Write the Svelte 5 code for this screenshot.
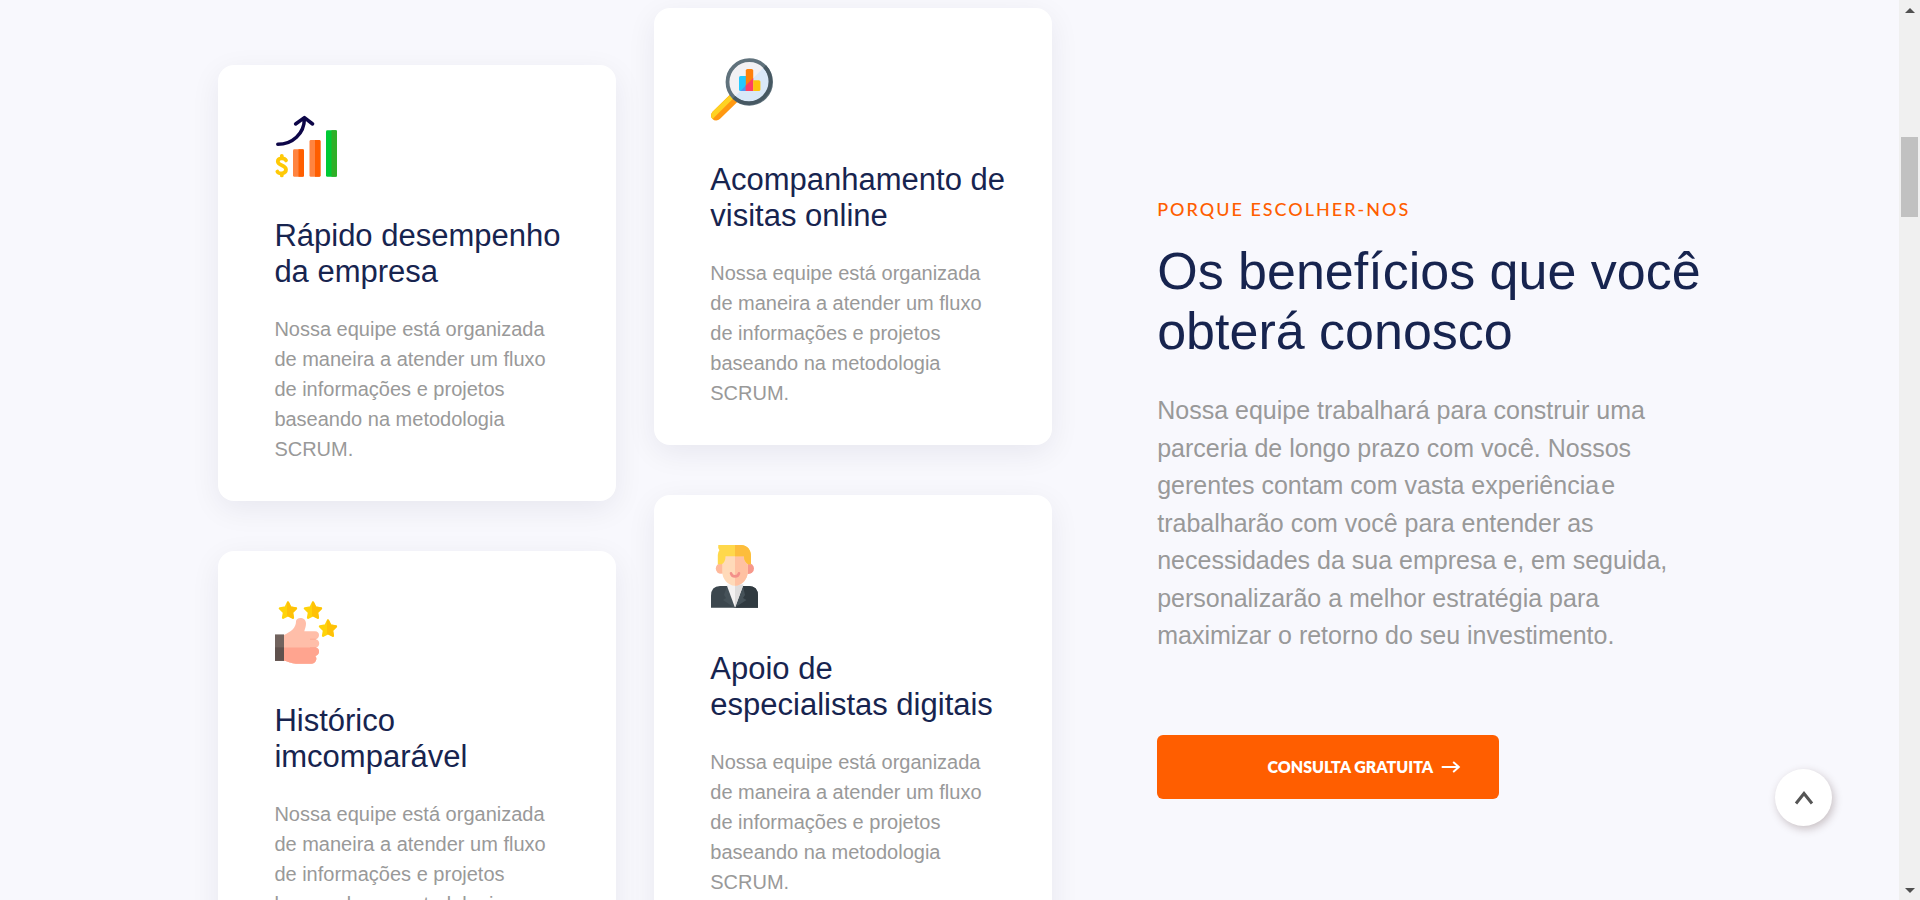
<script lang="ts">
  type Card = { icon: string; iconHeight: number; title: string };

  const text =
    'Nossa equipe está organizada de maneira a atender um fluxo de informações e projetos baseando na metodologia SCRUM.';

  const columns: Card[][] = [
    [
      { icon: 'growth', iconHeight: 64, title: 'Rápido desempenho da empresa' },
      { icon: 'thumb', iconHeight: 63, title: 'Histórico imcomparável' },
    ],
    [
      { icon: 'search', iconHeight: 65, title: 'Acompanhamento de visitas online' },
      { icon: 'person', iconHeight: 67, title: 'Apoio de especialistas digitais' },
    ],
  ];

  const stars = [
    [14, 9],
    [39, 9],
    [54, 27],
  ];
</script>

{#snippet icon(name: string, height: number)}
  <svg class="icon" width="64" {height} viewBox="0 0 64 {height}" aria-hidden="true">
    {#if name === 'growth'}
      <path d="M3.8 29.3C18 29.3 30.4 19 30.4 3.4M21.6 9 30.4 2.6 38.6 9" fill="none" stroke="#0d0648" stroke-width="3.5" stroke-linecap="round" stroke-linejoin="round" />
      <path d="M12 45.4C10.6 42.6 3.8 42.4 3.8 46.5C3.8 50.8 12 49.6 12 54.6C12 59 5 59.4 3.4 56.6M7.8 40.8V43M7.8 58.5V60.4" fill="none" stroke="#ffc906" stroke-width="3.8" stroke-linecap="round" stroke-linejoin="round" />
      <rect x="19" y="34.3" width="11" height="27.5" rx="1.4" fill="#ff8440" />
      <path d="M24.5 34.3h4.1q1.4 0 1.4 1.4v24.7q0 1.4-1.4 1.4h-4.1z" fill="#ff5e00" />
      <rect x="35.5" y="25" width="11" height="36.8" rx="1.4" fill="#ff8440" />
      <path d="M41 25h4.1q1.4 0 1.4 1.4v34q0 1.4-1.4 1.4H41z" fill="#ff5e00" />
      <rect x="52" y="15.3" width="11" height="46.5" rx="1.4" fill="#00ca35" />
      <path d="M57.5 15.3h4.1q1.4 0 1.4 1.4v43.7q0 1.4-1.4 1.4h-4.1z" fill="#2faf27" />
    {:else if name === 'search'}
      <path d="m6.2 57.4 17-16.6" stroke="#ff9811" stroke-width="10.4" stroke-linecap="round" />
      <path d="M2.6 61 25 38.8 19.4 37.4 2.6 53.8A5.2 5.2 0 0 0 2.6 61z" fill="#fed223" />
      <circle cx="39.3" cy="24" r="21.8" fill="#f2f1f4" />
      <path d="M54.7 8.6A21.8 21.8 0 0 1 23.9 39.4z" fill="#d9e8f8" />
      <path d="M30.6 18H36v15h-5.4q-1.6 0-1.6-1.6V19.6q0-1.6 1.6-1.6z" fill="#23c9ff" />
      <path d="M36 27.3V33h-5.5z" fill="#4e91f5" />
      <path d="M35.8 33V12.6q0-1.6 1.6-1.6h4.2q1.6 0 1.6 1.6V33z" fill="#ff810b" />
      <path d="M43.2 20.1V33h-7.4v-5.5z" fill="#ff3f62" />
      <path d="M43.2 22.2h5.6q1.6 0 1.6 1.6v7.6q0 1.6-1.6 1.6h-5.6z" fill="#ffc20b" />
      <circle cx="39.3" cy="24" r="21.8" fill="none" stroke="#60727c" stroke-width="3.8" />
      <path d="M54.7 8.6A21.8 21.8 0 0 1 23.9 39.4" fill="none" stroke="#465862" stroke-width="3.8" />
    {:else if name === 'thumb'}
      {#each stars as [x, y]}
        <g transform="translate({x} {y})">
          <path d="m0-7.4 2.4 4.9 5.6.9-4 4 .9 5.3L0 5.2-4.9 7.7l.9-5.3-4-4 5.6-.9z" fill="#ffd30a" stroke="#ffd30a" stroke-width="2.4" stroke-linejoin="round" />
          <path d="m0-7.4 2.4 4.9 5.6.9-4 4 .9 5.3L0 5.2z" fill="#ffc107" stroke="#ffc107" stroke-width="2" stroke-linejoin="round" />
        </g>
      {/each}
      <g transform="translate(0 -1)">
        <path d="M10 35C17 31.5 22 28 22 21.5C22 16.5 32 16.5 32 23.5C32 27 30.8 29 30.3 31.2H41C46.5 31.2 46 38.5 41.7 39.2C46.4 39.8 46.4 46.8 42 47.6C46.4 48.4 46 55.3 41.2 56C43.8 58 42 63.7 37.5 63.7H22C17 63.7 14.5 61.3 10 60.8z" fill="#ffbea9" />
        <path d="M10 47.4H42C46.4 48.4 46 55.3 41.2 56C43.8 58 42 63.7 37.5 63.7H22C17 63.7 14.5 61.3 10 60.8z" fill="#ffa48f" />
        <path d="M36 39.2h5.7M36 47.5h6M36 56h5.2" stroke="#fba791" stroke-width=".8" />
        <path d="M1 34.4h9v26.4H1z" fill="#71635e" />
        <path d="M1 47.4h9v13.4H1z" fill="#5f514d" />
      </g>
    {:else}
      <path d="M10 41h29q9 0 9 10v11.8H1V51q0-10 9-10z" fill="#3c474e" />
      <path d="M24.5 41H39q9 0 9 10v11.8H24.5z" fill="#303a40" />
      <path d="m17 41-3 9 2 3-3 2 11.5 7.8L36.5 55 33 53l2-3-2-9z" fill="#465259" />
      <path d="M16.5 39.5 25 62.8 33.5 39.5z" fill="#f4f2f2" />
      <path d="M25 39.5v23.3l8.5-23.3z" fill="#dedcdc" />
      <circle cx="11" cy="23.5" r="5.2" fill="#ffb99b" />
      <circle cx="38.6" cy="23.5" r="5.4" fill="#f7988b" />
      <path d="M12.2 10h25.6v16.5C37.8 34 32 40.8 25 40.8S12.2 34 12.2 26.5z" fill="#ffdab9" />
      <path d="M25 10h12.8v16.5C37.8 34 32 40.8 25 40.8z" fill="#ffc1a2" />
      <path d="M8.3 0H31C37.5 0 41 5 41 11v8.2h-2.8q-4.2-2.6-4.2-8H15.5q0 6-3.7 8H7.8V10Q7.8 7 9.4 5.2Q7.6 3 8.3 0z" fill="#ffd84b" />
      <path d="M25 0h6C37.5 0 41 5 41 11v8.2h-2.8q-4.2-2.6-4.2-8h-9z" fill="#fdbd3c" />
      <path d="M21 28.2q.6 3.2 4 3.2t4-3.2" fill="none" stroke="#f3908a" stroke-width="2.6" stroke-linecap="round" />
    {/if}
  </svg>
{/snippet}

<div class="page">
  <main>
    <section class="benefits">
      <div class="cards">
        {#each columns as column, i}
          <div class="column" class:lowered={i === 0}>
            {#each column as card}
              <article class="card">
                {@render icon(card.icon, card.iconHeight)}
                <h3>{card.title}</h3>
                <p>{text}</p>
              </article>
            {/each}
          </div>
        {/each}
      </div>
      <div class="intro">
        <span class="eyebrow">Porque escolher-nos</span>
        <h2>Os benefícios que você obterá conosco</h2>
        <p>
          Nossa equipe trabalhará para construir uma parceria de longo prazo com você. Nossos
          gerentes contam com vasta experiência&#8202;e trabalharão com você para entender as
          necessidades da sua empresa e, em seguida, personalizarão a melhor estratégia para
          maximizar o retorno do seu investimento.
        </p>
        <a class="cta" href="#consulta">
          Consulta gratuita
          <svg viewBox="0 0 20 12" aria-hidden="true"><path d="M1.5 6h16M12.8 1.5 17.8 6l-5 4.5" /></svg>
        </a>
      </div>
    </section>
    <button class="to-top" type="button" aria-label="Voltar ao topo">
      <svg viewBox="0 0 20 14" aria-hidden="true"><path d="M2 12.5 10 2.5l8 10" /></svg>
    </button>
  </main>
  <div class="scrollbar" aria-hidden="true">
    <i class="up"></i>
    <div class="thumb"></div>
    <i class="down"></i>
  </div>
</div>

<style>
  :global(body) {
    background: #f8f8fd;
    font-family: "Liberation Sans", Arial, sans-serif;
  }

  .page {
    display: flex;
    height: 100vh;
    overflow: hidden;
  }

  main {
    position: relative;
    flex: 1;
    min-width: 0;
    overflow: hidden;
  }

  h2,
  h3,
  p {
    margin: 0;
  }

  h2,
  h3 {
    color: #17244f;
    font-weight: 400;
  }

  .benefits {
    display: grid;
    grid-template-columns: minmax(0, 834fr) minmax(0, 590fr);
    gap: 105px;
    padding: 8px 8% 0 11.5%;
  }

  .cards {
    display: grid;
    grid-template-columns: repeat(2, minmax(0, 1fr));
    gap: 38px;
    align-items: start;
  }

  .column {
    display: flex;
    flex-direction: column;
    gap: 50px;
  }

  .lowered {
    padding-top: 57px;
  }

  .card {
    padding: 50px 40px 37px 56px;
    border-radius: 16px;
    background: #fff;
    box-shadow: 0 8px 30px rgba(20, 20, 50, 0.07);
  }

  .icon {
    display: block;
    margin-bottom: 39px;
  }

  .card h3 {
    font-size: 31px;
    line-height: 36px;
    margin-bottom: 24px;
  }

  .card p {
    max-width: 288px;
    color: #999;
    font-size: 20px;
    line-height: 30px;
  }

  .intro {
    padding-top: 189px;
  }

  .eyebrow {
    display: block;
    color: #ff5e00;
    font-family: "Lato Medium", Lato, sans-serif;
    font-size: 18px;
    font-weight: 500;
    line-height: 24px;
    letter-spacing: 2px;
    text-transform: uppercase;
  }

  .intro h2 {
    margin-top: 20px;
    font-size: 52px;
    line-height: 60px;
  }

  .intro p {
    max-width: 526px;
    margin-top: 31px;
    color: #999;
    font-size: 25px;
    line-height: 1.5;
  }

  .cta {
    display: flex;
    align-items: center;
    justify-content: flex-end;
    gap: 8px;
    box-sizing: border-box;
    width: 342px;
    max-width: 100%;
    height: 64px;
    margin-top: 80px;
    padding: 0 38px;
    border-radius: 6px;
    background: #ff5e00;
    color: #fff;
    font: 800 16px/24px Lato, sans-serif;
    text-decoration: none;
    text-transform: uppercase;
  }

  .cta svg {
    width: 20px;
    height: 12px;
  }

  .cta path,
  .to-top path {
    fill: none;
    stroke: currentColor;
    stroke-width: 2;
    stroke-linecap: round;
  }

  .to-top {
    position: absolute;
    right: 67px;
    bottom: 74px;
    display: grid;
    place-items: center;
    width: 57px;
    height: 57px;
    padding: 0;
    border: 0;
    border-radius: 50%;
    background: #fff;
    color: #555;
    box-shadow: 2px 3px 8px rgba(60, 30, 30, 0.26);
  }

  .to-top svg {
    width: 20px;
    height: 14px;
  }

  .to-top path {
    stroke-width: 3;
    stroke-linecap: butt;
  }

  .scrollbar {
    display: flex;
    flex-direction: column;
    align-items: center;
    box-sizing: border-box;
    width: 21px;
    padding: 8px 0 7px;
    background: #f0f0f0;
  }

  .thumb {
    width: 17px;
    height: 80px;
    margin-top: 124px;
    background: #c1c1c1;
  }

  .up,
  .down {
    border: 5px solid transparent;
    border-top: 0;
    border-bottom-color: #505050;
  }

  .down {
    margin-top: auto;
    border-top: 5px solid #505050;
    border-bottom-width: 0;
  }
</style>
